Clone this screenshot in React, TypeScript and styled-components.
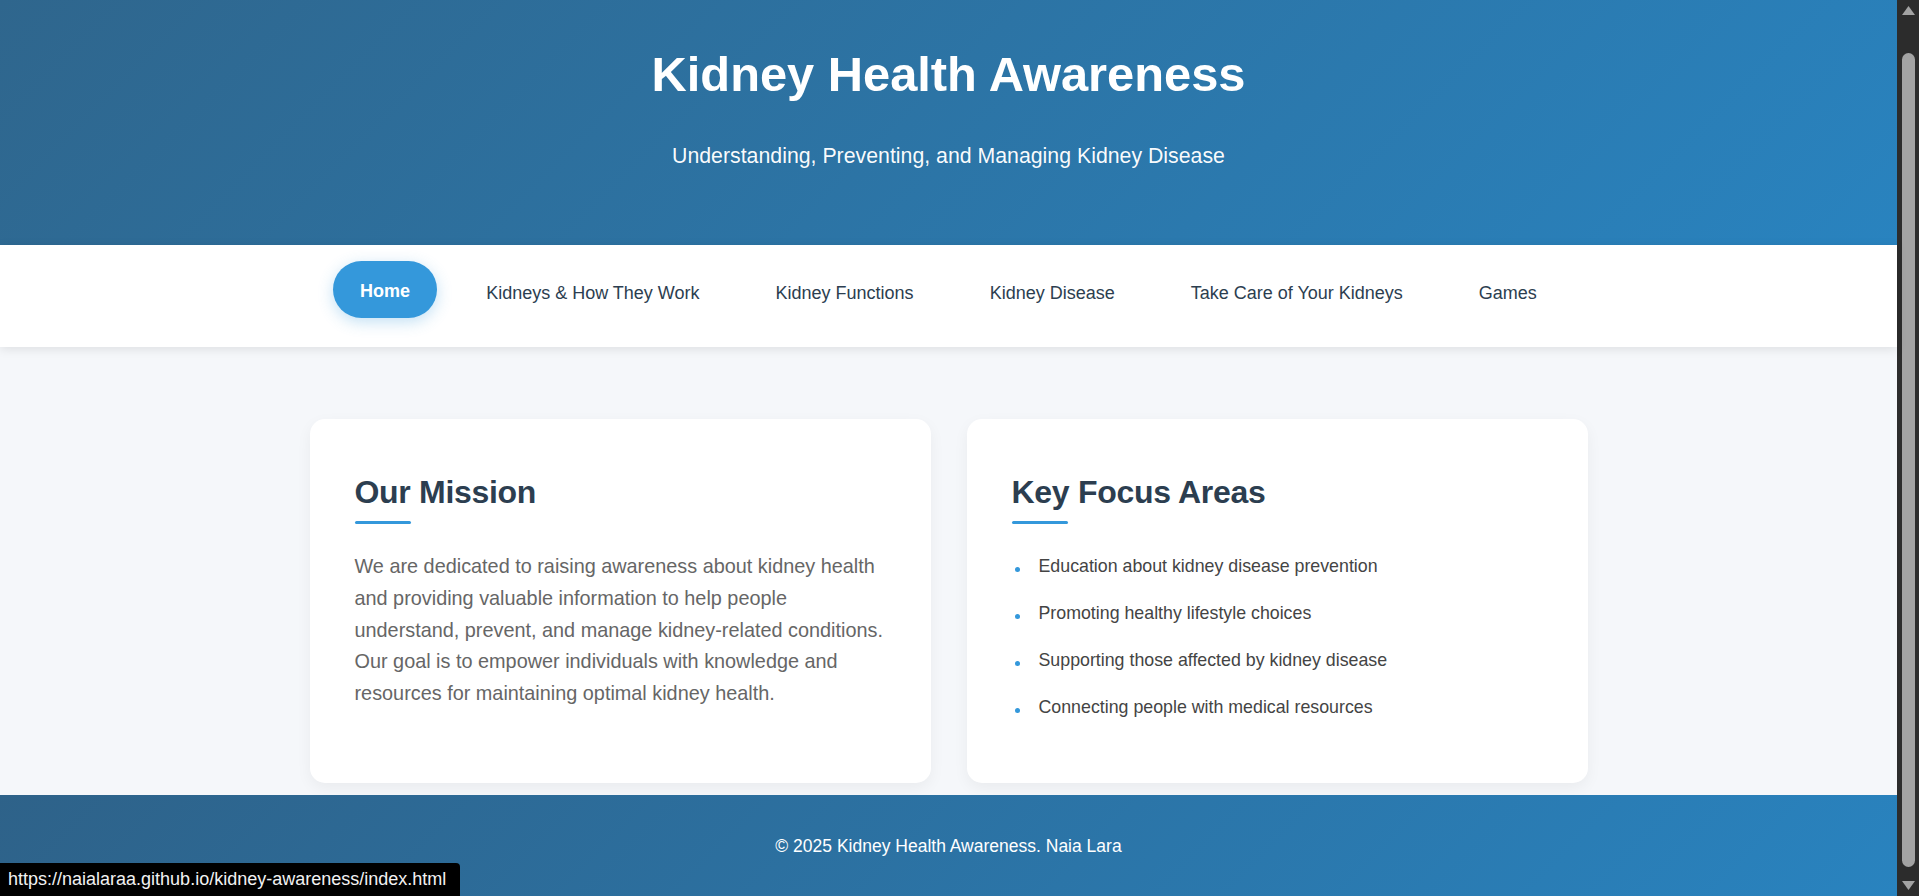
import React from "react";
import styled, { createGlobalStyle } from "styled-components";

const GlobalStyle = createGlobalStyle`
  html, body {
    margin: 0;
    padding: 0;
    height: 100%;
    overflow: hidden;
  }
  body {
    font-family: "Segoe UI", "Liberation Sans", Arial, sans-serif;
    background: #f5f7fa;
  }
  *, *::before, *::after {
    box-sizing: border-box;
  }
`;

const Shell = styled.div`
  display: grid;
  grid-template-columns: 1fr 22px;
  height: 100vh;
  overflow: hidden;
`;

const Page = styled.div`
  min-width: 0;
  height: 100vh;
  display: flex;
  flex-direction: column;
  background: #f5f7fa;
`;

const Header = styled.header`
  height: 245px;
  flex-shrink: 0;
  padding: 45px 20px 0;
  text-align: center;
  color: #ffffff;
  background: linear-gradient(135deg, #2f668d 0%, #2983bf 100%);
`;

const Title = styled.h1`
  margin: 0 0 37px;
  font-size: 48.8px;
  line-height: 1.2;
  font-weight: 700;
`;

const Tagline = styled.p`
  margin: 0;
  font-size: 21.3px;
  line-height: 1.5;
  color: rgba(255, 255, 255, 0.97);
`;

const Nav = styled.nav`
  position: relative;
  z-index: 1;
  height: 102px;
  flex-shrink: 0;
  padding-top: 18px;
  background: #ffffff;
  box-shadow: 0 2px 10px rgba(0, 0, 0, 0.1);
`;

const NavList = styled.ul`
  list-style: none;
  margin: 0;
  padding: 0;
  display: flex;
  justify-content: center;
  gap: 22px;
`;

const NavLink = styled.a<{ $active?: boolean }>`
  display: block;
  padding: 16px 27px 12px;
  font-size: 18px;
  line-height: 28.8px;
  white-space: nowrap;
  text-decoration: none;
  border-radius: 30px;
  font-weight: ${(p) => (p.$active ? 700 : 400)};
  color: ${(p) => (p.$active ? "#ffffff" : "#2c3e50")};
  background: ${(p) => (p.$active ? "#3498db" : "transparent")};
  box-shadow: ${(p) =>
    p.$active ? "0 4px 15px rgba(52, 152, 219, 0.3)" : "none"};
  transform: ${(p) => (p.$active ? "translateY(-2px)" : "none")};
`;

const Main = styled.main`
  flex-shrink: 0;
  padding: 72px 20px 12px;
`;

const CardGrid = styled.div`
  max-width: 1278px;
  margin: 0 auto;
  display: grid;
  grid-template-columns: 1fr 1fr;
  gap: 36px;
`;

const Card = styled.section`
  background: #ffffff;
  border-radius: 15px;
  padding: 53.6px 42px 52.5px 45px;
  box-shadow: 0 5px 15px rgba(0, 0, 0, 0.05);
`;

const CardTitle = styled.h2`
  margin: 0;
  font-size: 32px;
  line-height: 38.4px;
  font-weight: 700;
  letter-spacing: -0.3px;
  color: #2c3e50;

  &::after {
    content: "";
    display: block;
    width: 56px;
    height: 3px;
    margin-top: 9.7px;
    border-radius: 2px;
    background: #3498db;
  }
`;

const CardText = styled.p`
  margin: 27.6px 0 0;
  font-size: 19.85px;
  line-height: 31.7px;
  color: #666666;
`;

const FocusList = styled.ul`
  list-style: none;
  margin: 18.9px 0 0;
  padding: 0;
`;

const FocusItem = styled.li`
  position: relative;
  padding: 9.5px 0 9.5px 27px;
  font-size: 17.8px;
  line-height: 28px;
  color: #444444;

  &::before {
    content: "";
    position: absolute;
    left: 3px;
    top: 24px;
    width: 5px;
    height: 5px;
    border-radius: 50%;
    background: #3498db;
  }
`;

const Footer = styled.footer`
  flex: 1;
  padding: 38px 20px 0;
  text-align: center;
  color: #ffffff;
  font-size: 17.5px;
  line-height: 1.5;
  background: linear-gradient(135deg, #2e6289 0%, #2983bf 100%);
`;

const StatusBubble = styled.div`
  position: fixed;
  left: 0;
  bottom: 0;
  height: 33px;
  display: flex;
  align-items: center;
  padding: 0 14px 0 8px;
  background: #000000;
  color: #f2f2f2;
  font-family: "Segoe UI", "Liberation Sans", Arial, sans-serif;
  font-size: 18px;
  border-top-right-radius: 4px;
  white-space: nowrap;
`;

const ScrollTrack = styled.aside`
  height: 100vh;
  display: flex;
  flex-direction: column;
  align-items: center;
  padding-top: 5px;
  background: #2c2c2c;
`;

const ArrowIcon = styled.svg<{ $gap?: number }>`
  display: block;
  flex-shrink: 0;
  margin-top: ${(p) => p.$gap ?? 0}px;
`;

const Thumb = styled.div`
  width: 13px;
  height: 814px;
  margin-top: 37px;
  border-radius: 7px;
  background: #a3a3a3;
  flex-shrink: 0;
`;

const navItems = [
  "Home",
  "Kidneys & How They Work",
  "Kidney Functions",
  "Kidney Disease",
  "Take Care of Your Kidneys",
  "Games",
];

const focusAreas = [
  "Education about kidney disease prevention",
  "Promoting healthy lifestyle choices",
  "Supporting those affected by kidney disease",
  "Connecting people with medical resources",
];

export default function App() {
  return (
    <>
      <GlobalStyle />
      <Shell>
        <Page>
          <Header>
            <Title>Kidney Health Awareness</Title>
            <Tagline>Understanding, Preventing, and Managing Kidney Disease</Tagline>
          </Header>

          <Nav>
            <NavList>
              {navItems.map((item, i) => (
                <li key={item}>
                  <NavLink href="#" $active={i === 0}>
                    {item}
                  </NavLink>
                </li>
              ))}
            </NavList>
          </Nav>

          <Main>
            <CardGrid>
              <Card>
                <CardTitle>Our Mission</CardTitle>
                <CardText>
                  We are dedicated to raising awareness about kidney health and
                  providing valuable information to help people understand,
                  prevent, and manage kidney-related conditions. Our goal is to
                  empower individuals with knowledge and resources for
                  maintaining optimal kidney health.
                </CardText>
              </Card>
              <Card>
                <CardTitle>Key Focus Areas</CardTitle>
                <FocusList>
                  {focusAreas.map((a) => (
                    <FocusItem key={a}>{a}</FocusItem>
                  ))}
                </FocusList>
              </Card>
            </CardGrid>
          </Main>

          <Footer>© 2025 Kidney Health Awareness. Naia Lara</Footer>
        </Page>

        <ScrollTrack>
          <ArrowIcon width="15" height="11" viewBox="0 0 15 11">
            <polygon points="7.5,1 14,10 1,10" fill="#a3a3a3" />
          </ArrowIcon>
          <Thumb />
          <ArrowIcon $gap={13} width="15" height="11" viewBox="0 0 15 11">
            <polygon points="1,1 14,1 7.5,10" fill="#a3a3a3" />
          </ArrowIcon>
        </ScrollTrack>
      </Shell>

      <StatusBubble>https://naialaraa.github.io/kidney-awareness/index.html</StatusBubble>
    </>
  );
}
